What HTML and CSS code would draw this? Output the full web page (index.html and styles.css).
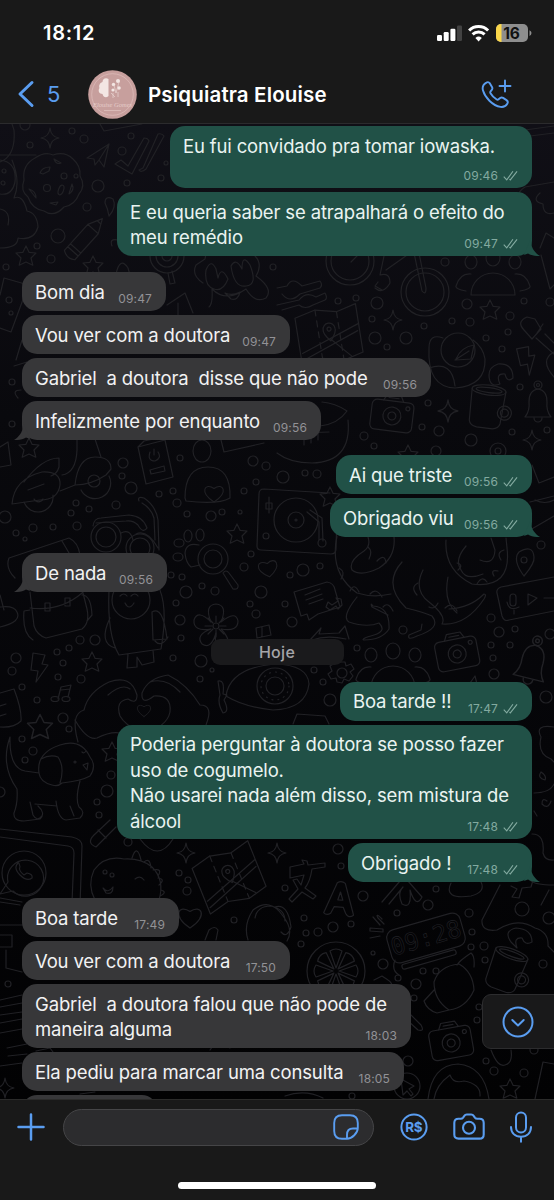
FILE: index.html
```html
<!DOCTYPE html>
<html lang="pt-BR">
<head>
<meta charset="utf-8">
<title>Psiquiatra Elouise</title>
<link rel="stylesheet" href="styles.css">
</head>
<body>
<svg class="sprites" width="0" height="0" aria-hidden="true">
  <symbol id="ticks" viewBox="0 0 16 11"><path d="M.8 6.800l3.200 3.400L10.600 1M6.900 9.300l.9.900L15 1"/></symbol>
  <symbol id="tail" viewBox="0 0 16 18"><path d="M7 0v4c.5 6 3.500 10.500 9 14-5 .300-9-.8-12-2.500L0 17z"/></symbol>
</svg>
<div class="phone">
  <header class="top">
    <div class="status">
      <span class="clock">18:12</span>
      <svg class="status-icons" width="98" height="20" viewBox="0 0 98 20">
        <g fill="#fff"><rect x="1" y="11" width="5" height="6" rx="1.2"/><rect x="7.700" y="8" width="5" height="9" rx="1.2"/><rect x="14.400" y="4.700" width="5" height="12.300" rx="1.2"/><rect x="21" y="1.600" width="5" height="15.400" rx="1.2" fill="#424242"/></g>
        <g fill="none" stroke="#fff" stroke-width="3"><path d="M33.100 6.500a13.500 13.500 0 0 1 19 0"/><path d="M36.600 10.400a8.600 8.600 0 0 1 12 0"/></g>
        <path d="M42.600 17.400l-3.200-3.300a4.700 4.700 0 0 1 6.400 0z" fill="#fff"/>
        <rect x="60" y="0" width="32" height="18" rx="5" fill="#8e8e8e"/>
        <path d="M65.500 0H65a5 5 0 0 0-5 5v8a5 5 0 0 0 5 5h.5z" fill="#fbd74a"/>
        <path d="M93.500 6.200q2 .9 2 2.900t-2 2.900z" fill="#8e8e8e"/>
        <text class="battery-text" x="75.500" y="14.700" text-anchor="middle">16</text>
      </svg>
    </div>
    <div class="nav">
      <svg class="back" width="18" height="28" viewBox="0 0 18 28"><path d="M15 2.500L3 14l12 11.500" fill="none" stroke="#5a9df0" stroke-width="3" stroke-linecap="round" stroke-linejoin="round"/></svg>
      <span class="count">5</span>
      <svg class="avatar" width="49" height="49" viewBox="0 0 49 49">
        <circle cx="24.500" cy="24.500" r="24.300" fill="#c79f9d"/><circle cx="24.500" cy="24.500" r="20.800" fill="none" stroke="#dfbfbc" stroke-width=".7"/>
        <path d="M20.500 9c-3-2-6 0-6 3-3 1-4 4-3 6-2 3 0 6 3 6 1 4 4 4 6 2z" fill="#f3e6e3"/>
        <g fill="#f3e6e3"><circle cx="30" cy="11" r="2"/><circle cx="25.500" cy="14.500" r="1.700"/><circle cx="31" cy="18" r="1.800"/><circle cx="25" cy="20" r="1.600"/></g>
        <path d="M31 12l-3 11M26 15l2 8M23 23l4 4M30 22v5M25 23v5" fill="none" stroke="#ead6d3" stroke-width=".7"/>
        <text class="avatar-name" x="24.500" y="36.500" text-anchor="middle">Elouise Gomes</text>
        <path d="M16 40.500h17" stroke="#ddc0bd" stroke-width=".8"/>
      </svg>
      <h1 class="title">Psiquiatra Elouise</h1>
      <svg class="call" width="31" height="31" viewBox="0 0 31 31" fill="none" stroke="#5a9df0" stroke-width="1.900" stroke-linecap="round" stroke-linejoin="round">
        <path d="M5.400 3.600c1.300-.8 2.700-.3 3.500.8l2.100 3.500c.6 1 .5 2-.2 2.900l-1.200 1.500c-.5.700-.5 1.300-.1 2 1.500 2.600 3.600 4.700 6.200 6.200.7.400 1.300.3 1.900-.2l1.600-1.300c.9-.7 1.900-.7 2.900-.1l3.400 2.200c1.300.9 1.600 2.300.8 3.600-1.400 2.300-3.800 3.700-6.800 3.200C11.800 26.600 4.100 18.800 2 11.500c-.9-3.200.7-6.400 3.400-7.900z"/><path d="M24 1.500v11M18.500 7h11"/>
      </svg>
    </div>
  </header>

  <main class="chat">
    <svg class="wallpaper" viewBox="0 124 554 975" width="554" height="975" aria-hidden="true">
      <defs>
        <path id="star" d="M0-10L3.200-3.600 10-3 5 2 6.800 9.200 0 6-6.800 9.200-5 2-10-3-3.200-3.600z"/>
        <path id="spark" d="M0-10Q1-1 9 0 1 1 0 10-1 1-9 0-1-1 0-10z"/>
        <path id="heart" d="M0 10C-17-1-10-12 0-5 10-12 17-1 0 10z"/>
        <path id="bolt" d="M-6-14L6-12 3-3 9-2-3 15-1 4-8 3z"/>
        <g id="camera"><rect x="-21" y="-14" width="42" height="30" rx="5"/><path d="M-10-14l3-6H7l3 6M-5-17H5"/><circle cy="1" r="9"/><circle cy="1" r="4"/><circle cx="15" cy="-8" r="2"/></g>
        <g id="mug"><ellipse cy="-17" rx="17" ry="5"/><ellipse cy="-17" rx="13" ry="2.500"/><path d="M-17-17l1 32q1 5 8 6H8q6-1 7-6l2-32"/><circle cx="18" cy="4" r="7"/><circle cx="18" cy="4" r="4"/></g>
        <g id="bell"><path d="M-13 13q5-6 4-15Q-9-14 0-15 9-14 9-2q-1 9 4 15zM-4 14a4 4 0 0 0 8 0"/><circle cy="-19" r="4"/><circle cy="-19" r="1.500"/></g>
        <g id="people"><path d="M-22 13a22 22 0 0 1 44 0zM-27 9q-11-2-10-5 4-13 15-12M27 9q11-2 10-5-4-13-15-12"/><ellipse cy="-24" rx="7" ry="8"/><ellipse cx="-22" cy="-20" rx="6" ry="7"/><ellipse cx="22" cy="-20" rx="6" ry="7"/></g>
        <g id="map"><path d="M-32-22L-11-27 10-22 30-27V22L10 27-11 22-32 27zM-30 14L30-7M0 4L18 24M-30 21L28 0"/><path d="M-11-27V22M10-22V27" stroke-dasharray="6 5"/><path d="M0 6Q-7-2-6-6A6 6 0 0 1 6-6Q7-2 0 6z"/><circle cy="-6" r="2"/></g>
        <g id="pencil"><path d="M-7 23V-12L0-26 7-12V23Q0 28-7 23zM-7-12H7M-7 14H7M-7 18H7M-2-21H2"/></g>
        <g id="flower"><path d="M-5-4Q-12-21 0-22 12-21 5-4 20-16 22-5 22 6 5 3 18 17 7 21-3 22 0 7-5 24-14 18-21 9-5 3-23 6-22-6-18-17-5-4z"/><circle r="3"/><path d="M0-4v-6M4 0h6M0 4v7M-4 0h-7M3-3l5-5M3 3l5 5M-3 3l-5 5M-3-3l-5-5"/></g>
        <g id="seg"><path d="M0-3L-6-20Q0-24 6-20z"/><path d="M0 3L-6 20Q0 24 6 20z"/></g>
        <g id="orange"><circle r="29"/><use href="#seg"/><use href="#seg" transform="rotate(45)"/><use href="#seg" transform="rotate(90)"/><use href="#seg" transform="rotate(135)"/></g>
        <g id="wheel"><circle r="24"/><circle r="19"/></g>
        <g id="glyph-a"><path d="M-15 16L-4-15q4-3 8 0L15 16q-5 4-8-1L4 9H-5l-3 7q-4 3-7 0zM-2 2H3L0-6z"/></g>
      </defs>
      <g class="doodles">
        <!-- top band -->
        <path d="M0 162q16-6 14-32l-2-6M0 155h36M12 160q9 22 2 38 9-4 13 13 10 2 11 16-4 14-20 11 0 10-18 10M0 209q11 2 8 16M0 160q17 2 15 22-3 14-15 12"/>
        <circle cx="4" cy="171" r="2"/><circle cx="3" cy="183" r="2"/>
        <use href="#spark" x="50" y="138"/>
        <path d="M35 158q10-7 18-3 12-4 20 4 8 7 7 17 6 10-1 18-4 11-15 13-10 11-20 4-12-2-16-14-8-6-4-17-2-15 11-22z"/>
        <path d="M40 173q2-6 10-6l-1 4-6 3zM29 189q7 2 7 9zM50 203l8-1-2 3zM69 194q6-4 3-10zM54 159q2 6 7 4z"/>
        <circle cx="47" cy="188" r="3.500"/><ellipse cx="61" cy="190" rx="2.500" ry="5" transform="rotate(20 61 190)"/><circle cx="64" cy="176" r="3"/><circle cx="76" cy="176" r="2"/>
        <path d="M87 158l22-14-5 23-5-7-4 5-1-6zM99 160l10-16"/>
        <path d="M115 164l6-4 7 6 16-28q4 0 5 3l-17 33zM139 170l4-2 15-34q4-1 6 2l-18 33q-5 4-7 1zM100 124l4 7 38-7"/>
        <path d="M105 203q0-8 8-4 4 8-4 17-1-7-4-13z"/>
        <use href="#pencil" transform="translate(85 238) rotate(42)"/>
        <use href="#star" x="26" y="256"/><use href="#star" x="93" y="266"/>
        <path d="M0 295l4-17 21 6v10L11 332 0 328M116 274q4-18 12-6l4 14M112 246q-3-8 6-6"/>
        <circle cx="167" cy="256" r="17"/><circle cx="167" cy="256" r="11"/><circle cx="167" cy="256" r="5"/><path d="M168 273l2 11 5-1-3-12M167 305l18-12 8 20M178 303v12"/>
        <path d="M203 283q-12-8-7-18l9-6q3-20 26-20t24 17q8 8 1 20 18 13 10 22-11 6-20-9-20 14-34 0 1 15-3 18M206 270q5-12 10-1l2 9q3-13 10 1-5 13-14 10-10-3-8-19zM231 266q5-9 11 3 0-16 8-4 8 20-4 21-12 2-15-20zM225 293q7 3 15-1-2 9-9 7z"/>
        <path d="M277 288l10-2q5-10 15 0l18-5q3 4 0 7l-20 6q-10 10-18 0M277 305l22-5q7-9 17-3l9-4q3 5 0 7l-12 5q-8 5-14 0l-17 5"/>
        <use href="#wheel" x="350" y="261"/><path d="M351 262l14-14M384 256l-4 19q10-3 10 8-7 12-15 5M386 270l24-17M378 282l-3 4 7 4M413 248l9 43q4 5 4-3l-8-40"/>
        <use href="#wheel" x="425" y="292"/><use href="#people" x="493" y="282"/>
        <path d="M540 248l6-15 8 5M541 255l9 34 4-4M525 130l29-4M522 137l32-4M525 210q-14-14 0-23l29-5M540 193q-9 8 3 11 0 12 11 9"/>
        <use href="#star" x="490" y="310"/><use href="#spark" x="393" y="320"/>
        <use href="#map" transform="translate(330 335) rotate(-9)"/>
        <circle cx="458" cy="350" r="17"/><path d="M456 359q5-12 18-14l-3 14-15 1zM455 360l14-9M443 338q-14-5-14 10-2 39 26 40 31-2 30-29-2-12-12-19M429 368q23-8 26 18"/>
        <path d="M524 330q-8-8 3-13l8 2 6 10-9 10zM543 324l-6 9M536 338l18 16M545 334l9 9M554 352q-15 8 0 25"/>
        <use href="#bolt" transform="translate(527 360) rotate(-20)"/>
        <path d="M490 381q-4-13 8-17 15-1 15 14-6 5-8-4-10-1-5 10-8 3-10-3z"/>
        <use href="#mug" transform="translate(487 407) rotate(7)"/><use href="#bell" x="538" y="404"/>
        <use href="#camera" transform="translate(392 415) rotate(7)"/><use href="#spark" transform="translate(448 411) scale(1.100)"/>
        <path d="M322 402q13 1 25 9-9 13-27 15M348 420q4 42-36 43-22 0-35-10M301 433l28-1M304 438v7M311 435v8M318 433v7"/>
        <use href="#spark" x="532" y="440"/><use href="#star" x="408" y="455"/>
        <circle cx="498" cy="451" r="8"/><circle cx="498" cy="451" r="3"/>
        <path d="M16 360l6-20M14 366l13-4M18 398q-7-8 3-8"/>
        <!-- middle -->
        <use href="#star" x="29" y="448"/><path d="M0 447l8-5 3 23-11 2M138 447l27-7 8 37-27 7zM138 447l6-6 15-3M150 470l14-4 1 5-14 3zM150 452q-3 9 5 9 7-3 3-9M154 449v6M221 440l3 12 40-9"/>
        <path d="M12 504q2-25 30-32 19-1 18 13-2 15-20 15zM28 490l16-6M24 482q18-24 35-24v9q-2 7-8 9M62 475q14-2 15-25V430M60 491l15-6q3-28 20-28 16 0 16 12l-5 6q-15 10-31 10M92 430l9 27"/>
        <path d="M24 502a15 15 0 0 0 29-7M34 499a5 5 0 0 0 9 0M81 490a15 15 0 0 0 28-14"/><circle cx="94" cy="481" r="6"/>
        <ellipse cx="202" cy="451" rx="9" ry="11"/><path d="M185 498q0-31 23-31t22 31q-12 7-44 3z"/><use href="#heart" transform="translate(214 493) scale(.9)"/>
        <path d="M93 526q1-8 8-8l28-3q14 1 18 13-4 6-9-3-5-5-12-4l-30 2M139 501q-2-5 5-3 12 8 14 22l1 30M142 503q9 5 12 15l1 22M121 533q9-5 12 7M136 534q11-5 22 14"/>
        <circle cx="106" cy="537" r="15"/><circle cx="106" cy="537" r="10"/><circle cx="140" cy="548" r="14"/><circle cx="140" cy="548" r="10"/>
        <ellipse cx="188" cy="536" rx="4" ry="6"/><ellipse cx="200" cy="535" rx="4" ry="6"/><ellipse cx="179" cy="543" rx="5" ry="4"/><ellipse cx="178" cy="557" rx="5" ry="4"/><path d="M199 545q-13-3-14 8 1 10 6 14l9-2"/>
        <circle cx="213" cy="559" r="15"/><circle cx="213" cy="559" r="9"/><path d="M223 573q3-4 6 0l9 12q1 5-5 4z"/>
        <use href="#star" x="237" y="534"/><use href="#heart" transform="translate(268 568) rotate(-10) scale(.9)"/>
        <path d="M330 493l-66-4q-5 0-5 5l-2 52q0 4 4 4l70 4q5 0 5-5l1-36"/><circle cx="296" cy="520" r="22"/><circle cx="296" cy="520" r="8"/><circle cx="296" cy="520" r="1"/><path d="M307 512l12 10v18M310 510l12 8 1 23"/><circle cx="322" cy="543" r="4"/><path d="M269 497v16M266 503h6v6h-6z"/><circle cx="266" cy="536" r="3"/>
        <use href="#star" x="330" y="497"/><path d="M532 465l7 18 15-6M530 502l24-6M530 530l24-14M535 500q10 5 19 0"/>
        <path d="M15 578q-10-10-6-20l60-20q9 4 11 17M62 541l7 12M30 592l4 34q3 9 12 12l36-9q8-6 5-20l-6-24M30 608q30 4 52-15M45 603h5v8h-5zM65 598h5v8h-5zM30 610l-6 1q-2 22 9 29M82 595q9 0 10 20l-5 6M0 627q22-5 17-15Q14 605 0 607M0 595l4 15"/>
        <path d="M109 590q-2 45 10 65l42-6q8-45-4-65M110 618q-12 25 5 30M152 612q11-7 15 27l-14 1zM155 641q6 7 13-4M128 654l-1 14 10-1v-10l5 8 12-3-1-12"/><circle cx="131" cy="600" r="19"/><path d="M120 596q4-4 7 0M131 596q4-4 7 0M125 603q4 8 9 0"/>
        <use href="#flower" x="216" y="626"/><path d="M256 628l13-3 2 10-14 3zM262 627v10"/>
        <path d="M394 537q2 20-15 31-18 9-27 2-4-9 12-19 7-5 4-14M337 536q-8 37 20 57 16 5 34 1M402 562q-20 22 4 46 17 4 26 8 10 12-15 20-10 5-8-1l12-5 1-6M357 597q-16 20-8 25 18 6 30 1 8 8-5 12-14 4-10 5 18 0 25-11 1-22-16-23-3-4-1 1 10 5 16 8M423 570q-10 20 6 32 18 14 13 22 24 2 42-25 3-5 0-5-14 14-35 15M448 577q-5 25 9 36M446 540q-2 30 26 44 40 5 35-36l-1-10M466 546q-12 14-5 24 5 11 22 4M480 560q14 6 15-10l-4-12"/>
        <path d="M339 568q7 4 2 11M350 591q4-9 9 1M370 594q6-7 12 3M368 547q5 4 1 12M377 561q8-8 9 2M457 563q7 2 1 7M477 584q5-9 10-2M494 576q-4-7 4-5M504 550q-8 2-3 10M418 583q-8 4-1 12M383 607q5-6 10 4M429 607q6 3 9-4M445 608q7-7 12 3"/>
        <path d="M294 592l33-10q7 1 8 8l5 17-22 7-9 6-2-6-6 2zM305 595l15-6M306 600l16-6M309 604l14-5M328 602l4 3 6-4-2-3 5 1 1 6-4 4-2-3-6 4-4-3z"/>
        <path d="M524 576q-12-16-5-24 14-8 15 5 1 6-10 19z"/><circle cx="524" cy="560" r="3"/>
        <path d="M554 577l-53 10q-5 2-4 6l5 23q2 6 7 4l45-9M528 594v11l9-7zM544 598h10"/><rect x="510" y="594" width="6" height="12" rx="3"/><path d="M507 602q2 10 12 5M514 610v4"/>
        <path d="M310 640l11-12-2 6 20-1 6-7 4 13M312 640q14-5 34-1"/>
        <use href="#camera" transform="translate(457 653) rotate(-11)"/><use href="#bell" transform="translate(532 663) rotate(14) scale(1.200)"/><use href="#people" transform="translate(393 675)"/>
        <circle cx="342" cy="673" r="5"/><path d="M339 662h6l1 4 5-2 3 5-4 3 3 4-4 5-5-2-2 4-5-1-1-4-5 1-3-5 4-3-2-5 5-3z"/>
        <use href="#bolt" transform="translate(39 667)"/><use href="#star" x="92" y="662"/>
        <path d="M58 699l3-12 10-2-3 12M61 690l9-1"/><ellipse cx="55" cy="699" rx="4" ry="2.500"/><ellipse cx="66" cy="699" rx="4" ry="2.500"/>
        <path d="M78 742q-8-28 6-32 4-18 25-28 22-8 28 13 0 10-9 4-13 2-8 17 4 8 22 18 25-7 28-22 2-17-16-16-13 10-12-3 6-15 26-18 19 9 32 30 14 0 6 20l-8 17M108 695q14-12 22-6M150 682q16-5 30 10"/><use href="#heart" transform="translate(144 710) scale(.65)"/>
        <path d="M226 696q4-28 49-32 33 1 34 20-3 25-36 26-29-3-47-14zM220 695l-2-14q7-2 5 13l4 1-3 5q6 12-1 13-6-10-3-18z"/><circle cx="275" cy="686" r="18"/><circle cx="275" cy="686" r="14" stroke-dasharray="1 5"/><circle cx="275" cy="686" r="9"/>
        <path d="M0 693l14-4q8 21 7 32-7 7-21 6M0 706l6-2M0 716l6-2M293 724l4-10 28 2 4 8M470 683l5-7 2 8-5 9"/>
        <use href="#star" transform="translate(40 727) scale(1.250)"/>
        <path d="M75 720q12 21 22 18 14-7 23-5"/>
        <!-- lower middle -->
        <path d="M10 737q-10 28 7 52 1 14-3 24-1 8 10 8l16-2q6-6-2-13M10 737q-1 31 15 34l14 2M39 773q-3-20 21-28 21-7 30 12 7 9 0 19-9 5-28 7-4 4-10 2-12-3-13-12M41 759q9-5 17-2 7 10 2 26M30 802l3 13q4 7 9 1M35 804l22 2M56 801q2 18 10 19l14-2q6-6-1-11-4-8 1-26M70 806l4 10M83 765l5-2-1 7zM82 752q2 2 4-1"/><circle cx="75" cy="762" r="1"/>
        <use href="#star" x="112" y="752"/><path d="M0 829l72 8q10 2 10 9l-2 60M0 837l68 9q6 1 6 7l-2 50M0 898l22 4"/>
        <circle cx="24" cy="873" r="22"/><path d="M8 882l-8 12 13-3a18 18 0 1 0-5-9zM18 863q-5 5 2 12t12 3q1-4-5-5l-3 2q-6-5-4-8-1-5-2-4z"/>
        <path d="M116 827l-20 20q-10-4-2-12l16-15M98 830l8 8M140 839q18 24 33 0"/>
        <path d="M95 900q-8-15-1-30 11-15 30-11 17-1 28 8 13 13 7 33M103 888q5 6 10-1 0 8-7 6zM135 879q5-4 9 1M132 858q5-15 9 2M144 862q6-5 7 6M153 870q10-2 5 6M158 878q8 1 1 7M161 890q7 2-1 6"/><circle cx="105" cy="872" r="2"/><circle cx="112" cy="875" r="2"/>
        <use href="#spark" x="186" y="853"/><use href="#spark" x="277" y="853"/><use href="#map" transform="translate(230 877) rotate(-22)"/>
        <path d="M290 867l14-3-2-4 5 1 1 4 17-2v4l-13 2q-2 13-7 19l11 8-3 3-11-7-10 10-3-3 9-10-5-9 4-1 4 6 3-10-14 3z"/><use href="#glyph-a" transform="translate(340 898) rotate(5)"/>
        <path d="M382 902l18-21h8l14 16q-6 12-12-7 2 20-8 14-5-11 1-17l-14 17M451 883q-8 17 20 13 15-4 10-14M511 886l6 3-5 8 7 1 3-10 9-1 2-7M541 905l8-15M500 885l-18 35q-1 12 15 10 20-13 38-2 14 4 13 18l6 6M554 727q-20-3-13 10-4 17 10 22l3 3M541 772q6 4 4 8-8-2-4-8M534 793q16 0 20-9M547 801q-5-4-5 3 6 6 9-3M534 811l3 5M532 834q13 0 11 19 2 8 11 7M554 885q-20 0-24-5"/>
        <use href="#heart" transform="translate(190 917) scale(1.100)"/><path d="M248 940q-5-15 5-30 17-13 30 6 11 14 4 25M255 918q2-12 16-12 14 3 14 15M205 940l4-10q6-5 9 0l-2 10M275 907q13-4 16 20-4 12-10 5"/>
        <!-- bottom band -->
        <use href="#orange" x="336" y="971"/>
        <g transform="rotate(-16 426 938)"><rect x="388" y="921" width="76" height="34" rx="8"/><rect x="395" y="957" width="56" height="5" rx="2"/><text class="doodle-clock" x="426" y="946" text-anchor="middle">09:28</text></g>
        <path d="M373 917l7 8M382 919q-7-7-4-1l6 6M370 928l13 1v3l-13-1zM370 938l10-2"/>
        <path d="M434 982q5-16 25-18 14 8 15 26-8 18-25 20-15-10-15-28zM457 965q2-4 14-12 4 3 3 14M435 989l-11 12q3 9 13 12l12-3M374 980l8-4 6 4q4 2 5 9M385 1000l33 30q7 2 3-5l-25-25"/>
        <path d="M511 942q-8-11 5-14 16 1 16 14-7 4-10-4-9-1-5 10z"/><use href="#mug" transform="translate(506 970) rotate(20)"/>
        <use href="#camera" transform="translate(451 1042) rotate(-10)"/><use href="#star" x="510" y="1089"/><circle cx="407" cy="1086" r="13"/><path d="M401 1079l2 16 4-4 4 5 2-2-4-5 5-3z"/>
        <path d="M428 1099q4-34 30-35 26 2 31 35M434 1099q2-14 16-24 3 9 14 6 17 3 16 15M535 1099l8-37 11 2M491 1050q7 18 14 15 8-2 6-15"/>
        <path d="M0 902l20 3M0 925h22M0 935h12v12H0M6 950v18l16 4M0 1000l22-5M0 1007l22-4M0 1015l22-3M0 1023l22-4M0 1033l22-4M7 1048l20-4M8 1056l19-2M0 1066l22-3"/><use href="#spark" x="5" y="1088"/>
        <path d="M36 1051l14-3 3 4M80 1094l15-2M210 1050l5-7 15 5M395 960q-4 10 4 15M285 1096q20-7 38 2"/>
        <g id="dots"></g>
      </g>
    </svg>

    <div class="thread">
      <div class="msg out w362 h61"><p class="text">Eu fui convidado pra tomar iowaska.</p><span class="time">09:46<svg class="ticks"><use href="#ticks"/></svg></span></div>
      <div class="msg out w415 h64"><p class="text">E eu queria saber se atrapalhará o efeito do<br>meu remédio</p><span class="time">09:47<svg class="ticks"><use href="#ticks"/></svg></span><svg class="tail"><use href="#tail"/></svg></div>

      <div class="msg in w144 group"><p class="text">Bom dia</p><span class="time">09:47</span></div>
      <div class="msg in w268"><p class="text">Vou ver com a doutora</p><span class="time">09:47</span></div>
      <div class="msg in w409"><p class="text">Gabriel  a doutora  disse que não pode</p><span class="time">09:56</span></div>
      <div class="msg in w299"><p class="text">Infelizmente por enquanto</p><span class="time">09:56</span><svg class="tail"><use href="#tail"/></svg></div>

      <div class="msg out w196 group-tight"><p class="text">Ai que triste</p><span class="time">09:56<svg class="ticks"><use href="#ticks"/></svg></span></div>
      <div class="msg out w202"><p class="text">Obrigado viu</p><span class="time">09:56<svg class="ticks"><use href="#ticks"/></svg></span><svg class="tail"><use href="#tail"/></svg></div>

      <div class="msg in w145 group"><p class="text">De nada</p><span class="time">09:56</span><svg class="tail"><use href="#tail"/></svg></div>

      <div class="day">Hoje</div>

      <div class="msg out w192 after-day"><p class="text">Boa tarde !!</p><span class="time">17:47<svg class="ticks"><use href="#ticks"/></svg></span></div>
      <div class="msg out w415 h115"><p class="text">Poderia perguntar à doutora se posso fazer<br>uso de cogumelo.<br>Não usarei nada além disso, sem mistura de<br>álcool</p><span class="time">17:48<svg class="ticks"><use href="#ticks"/></svg></span></div>
      <div class="msg out w184"><p class="text">Obrigado !</p><span class="time">17:48<svg class="ticks"><use href="#ticks"/></svg></span><svg class="tail"><use href="#tail"/></svg></div>

      <div class="msg in w157 group"><p class="text">Boa tarde</p><span class="time">17:49</span></div>
      <div class="msg in w268"><p class="text">Vou ver com a doutora</p><span class="time">17:50</span></div>
      <div class="msg in w389 h64"><p class="text">Gabriel  a doutora falou que não pode de<br>maneira alguma</p><span class="time">18:03</span></div>
      <div class="msg in w382"><p class="text">Ela pediu para marcar uma consulta</p><span class="time">18:05</span></div>
      <div class="msg in w135"></div>
    </div>

    <div class="jump"><svg width="32" height="32" viewBox="0 0 32 32" fill="none" stroke="#5a9df0" stroke-width="2" stroke-linecap="round" stroke-linejoin="round"><circle cx="16" cy="16" r="14.500"/><path d="M10.300 14l5.700 5.500 5.700-5.500"/></svg></div>
  </main>

  <footer class="composer">
    <div class="tools">
      <svg class="plus" width="28" height="28" viewBox="0 0 28 28"><path d="M14 1.500v25M1.500 14h25" stroke="#5a9df0" stroke-width="2.500" stroke-linecap="round"/></svg>
      <div class="field"><svg width="26" height="26" viewBox="0 0 26 26" fill="none" stroke="#5a9df0" stroke-width="1.900" stroke-linejoin="round"><path d="M14 24.800H9C3.500 24.800 1.200 22.500 1.200 17V9C1.200 3.500 3.500 1.200 9 1.200h8C22.500 1.200 24.800 3.500 24.800 9v5c0 5-5.800 10.800-10.800 10.800z"/><path d="M14 24.500v-3.600c0-4.500 1.600-6.400 6-6.400h4.600"/></svg></div>
      <svg class="money" width="28" height="28" viewBox="0 0 28 28"><circle cx="14" cy="14" r="12.600" fill="none" stroke="#5a9df0" stroke-width="2"/><text class="money-text" x="13.800" y="18.800" text-anchor="middle">R$</text></svg>
      <svg class="photo" width="32" height="28" viewBox="0 0 32 28" fill="none" stroke="#5a9df0" stroke-width="2.100" stroke-linejoin="round"><path d="M5.500 5.800h2.300c1 0 1.700-.4 2.300-1.200l1.200-1.700c.6-.9 1.400-1.400 2.500-1.400h4.400c1.100 0 1.900.5 2.500 1.400l1.200 1.700c.6.800 1.300 1.200 2.300 1.200h2.300c2.800 0 4.200 1.400 4.200 4.200v11.400c0 2.800-1.400 4.200-4.200 4.200h-21c-2.800 0-4.200-1.400-4.200-4.200V10c0-2.800 1.400-4.200 4.200-4.200z"/><circle cx="16" cy="14.800" r="6"/></svg>
      <svg class="mic" width="24" height="32" viewBox="0 0 24 32" fill="none" stroke="#5a9df0" stroke-width="2" stroke-linecap="round"><rect x="7" y="1.500" width="10" height="20" rx="5"/><path d="M2 16c0 6 4 9.800 10 9.800S22 22 22 16M12 26v4.800"/></svg>
    </div>
    <div class="home"></div>
  </footer>
</div>
<script src="dots.js"></script>
</body>
</html>
```
FILE: dots.js
```js
// Small rings scattered between the doodles: x, y, radius.
const dots = `25 125 5,72 131 3,84 139 4,30 145 3,131 136 3,122 151 4,127 183 3,98 186 6,161 178 3,166 163 2,87 207 4,58 236 7,37 246 3,51 259 4,6 267 3,9 300 3,11 313 2,12 382 3,12 424 3,273 267 3,445 262 4,338 301 3,356 298 3,377 303 6,467 304 5,524 301 3,550 302 4,510 316 4,452 321 3,470 322 4,424 326 3,372 319 3,375 338 6,406 338 6,387 347 3,508 332 3,486 338 3,502 349 3,520 387 3,428 403 3,422 427 3,439 431 5,512 432 3,547 430 3,471 440 6,364 436 4,374 446 3,436 451 5,123 463 5,122 476 3,131 488 6,180 458 3,253 461 5,266 466 4,256 482 3,244 491 3,173 491 3,159 494 3,177 503 4,187 514 3,211 516 5,222 512 3,240 512 2,5 517 6,76 503 3,89 509 3,71 513 3,116 505 4,77 526 4,53 527 3,33 528 4,16 533 3,25 539 2,283 477 6,305 473 3,317 474 4,251 554 3,244 567 4,261 592 6,250 604 3,256 614 4,171 575 3,182 577 3,202 586 3,215 591 4,186 592 6,176 603 3,180 620 5,181 638 3,290 575 3,303 570 6,320 566 3,541 545 4,285 604 3,292 622 5,403 630 4,491 618 4,499 632 5,515 629 3,550 634 5,491 645 3,510 645 3,493 658 3,494 674 5,357 648 3,546 697 6,80 640 4,95 640 5,57 652 3,69 648 3,63 663 3,16 658 5,12 671 4,58 677 3,81 679 4,22 687 3,37 700 3,63 718 5,173 658 3,201 661 6,212 670 2,200 679 3,314 670 3,323 682 3,330 700 6,22 739 3,33 751 4,25 760 3,69 729 3,111 775 4,107 791 6,97 802 3,99 815 3,0 792 5,128 842 4,179 873 3,188 880 3,187 891 4,338 849 5,341 866 3,363 896 5,436 889 3,428 905 5,397 913 3,469 913 4,522 909 7,549 918 6,285 888 3,304 918 3,333 927 5,351 924 3,306 933 3,318 932 4,301 944 3,234 920 3,373 953 2,383 964 5,398 978 3,416 984 5,423 971 3,436 971 3,472 932 3,471 947 3,484 946 4,485 960 3,543 964 4,479 1007 3,477 1020 3,414 998 3,408 1061 5,486 1061 3,494 1071 4,524 1073 4,534 1050 4,8 984 3,352 1096 3`;
const layer = document.getElementById("dots");
for (const dot of dots.split(",")) {
  const [x, y, r] = dot.trim().split(" ");
  const ring = document.createElementNS("http://www.w3.org/2000/svg", "circle");
  ring.setAttribute("cx", x);
  ring.setAttribute("cy", y);
  ring.setAttribute("r", r);
  layer.appendChild(ring);
}
```
FILE: styles.css
```css
* { box-sizing: border-box; }
body { margin: 0; background: #191919; font-family: Inter, "Liberation Sans", sans-serif; }
.sprites { display: none; }
.phone { width: 554px; height: 1200px; overflow: hidden; display: flex; flex-direction: column; background: #191919; }

.top { height: 124px; flex: none; border-bottom: 1px solid #2b2b2d; background: #191919; }
.status { height: 66px; padding: 24px 24px 0 43px; display: flex; justify-content: space-between; align-items: flex-start; color: #fff; }
.clock { font-size: 20.500px; line-height: 19px; font-weight: 600; font-variant-numeric: proportional-nums; letter-spacing: 0.500px; }
.clock { letter-spacing: 0.700px; font-size: 20px; }
.status-icons { margin-right: -4px; }
.battery-text { font-size: 15.500px; font-weight: 700; fill: #111; }
.nav { height: 53px; padding: 3px 42px 0 17px; display: flex; align-items: center; color: #fff; }
.avatar { flex: none; }
.count { margin-left: 12px; width: 41px; font-size: 22px; color: #5a9df0; }
.title { margin: 0 auto 0 11px; font-size: 20.500px; font-weight: 600; letter-spacing: 0.150px; }
.avatar-name { font: italic 6.500px "Liberation Serif", serif; fill: #e6cdca; }

.chat { position: relative; height: 975px; flex: none; overflow: hidden; background: linear-gradient(#100f16, #09090d 30%, #050508 65%, #020203); }
.wallpaper { position: absolute; left: 0; top: 0; }
.doodles { fill: none; stroke: #212125; stroke-width: 1.200; stroke-linecap: round; stroke-linejoin: round; }
.doodle-clock { font: 24px "DejaVu Sans Mono", monospace; stroke-width: 0.600; }

.thread { position: relative; padding: 2px 22px 0; display: flex; flex-direction: column; gap: 4px; }
.msg { position: relative; flex: none; height: 39px; padding: 7.500px 13px 0; border-radius: 15px; color: #f2f2f3; }
.in { align-self: flex-start; background: #373739; }
.out { align-self: flex-end; background: #215147; color: #eaf4f1; }
.text { margin: 0; font-size: 18.500px; line-height: 25.500px; letter-spacing: -0.150px; white-space: pre; }
.time { position: absolute; right: 14px; bottom: 5px; display: flex; align-items: center; gap: 5px; font-size: 12px; line-height: 15px; letter-spacing: 0.150px; color: #929296; }
.out .time { color: #83aaa0; }
.ticks { width: 15px; height: 11px; fill: none; stroke: #83aaa0; stroke-width: 1.200; }
.tail { position: absolute; width: 16px; height: 18px; bottom: 0; right: -8px; fill: #215147; }
.in .tail { right: auto; left: -8px; transform: scaleX(-1); fill: #373739; }

.group { margin-top: 12px; }
.group-tight { margin-top: 11px; }
.after-day { margin-top: 12.500px; }
.h61 { height: 62px; }
.h64 { height: 64px; }
.h115 { height: 114.500px; }
.w135 { width: 135px; }
.w144 { width: 144px; }
.w145 { width: 145px; }
.w157 { width: 157px; }
.w184 { width: 184px; }
.w192 { width: 192px; }
.w196 { width: 196px; }
.w202 { width: 202px; }
.w268 { width: 268px; }
.w299 { width: 299px; }
.w362 { width: 362px; }
.w382 { width: 382px; }
.w389 { width: 389px; }
.w409 { width: 409px; }
.w415 { width: 415px; }

.day { align-self: center; width: 133px; height: 26px; margin-top: 43px; border-radius: 9px; background: #1a1a1c; color: #a5a5a8; font-size: 16px; font-weight: 500; line-height: 26px; text-align: center; letter-spacing: 0.300px; }

.jump { position: absolute; right: -1px; top: 870px; width: 73px; height: 55px; padding-left: 19px; display: flex; align-items: center; border: 1px solid #2c2c2e; border-radius: 9px 0 0 9px; background: #19191a; }

.composer { height: 101px; flex: none; border-top: 1px solid #2b2b2a; background: #191919; }
.tools { height: 54px; padding: 0 21px 0 17px; display: flex; align-items: center; }
.field { width: 311px; height: 37px; margin-left: 18px; padding-right: 14px; display: flex; align-items: center; justify-content: flex-end; border: 1px solid #454547; border-radius: 19px; background: #2c2c2e; }
.money { margin-left: 26px; }
.money-text { font-size: 13.500px; font-weight: 700; fill: #5a9df0; letter-spacing: -0.400px; }
.photo { margin-left: 25px; }
.mic { margin-left: auto; }
.home { width: 198px; height: 7px; margin: 28px auto 0; border-radius: 4px; background: #fff; }
```
